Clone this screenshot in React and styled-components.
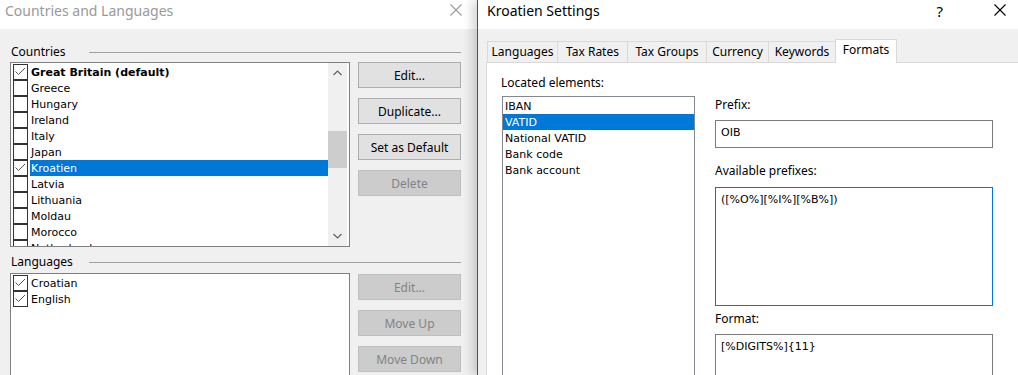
import React from "react";
import styled, { createGlobalStyle } from "styled-components";

const GlobalStyle = createGlobalStyle`
  html, body {
    margin: 0;
    padding: 0;
    background: #f0f0f0;
  }
  body {
    width: 1018px;
    height: 375px;
    overflow: hidden;
    font-family: "Noto Sans", "Liberation Sans", sans-serif;
    font-size: 12px;
    color: #000;
  }
`;

const countries = [
  { name: "Great Britain (default)", checked: true, bold: true },
  { name: "Greece" },
  { name: "Hungary" },
  { name: "Ireland" },
  { name: "Italy" },
  { name: "Japan" },
  { name: "Kroatien", checked: true, selected: true },
  { name: "Latvia" },
  { name: "Lithuania" },
  { name: "Moldau" },
  { name: "Morocco" },
  { name: "Netherlands" },
];

const languages = [
  { name: "Croatian", checked: true },
  { name: "English", checked: true },
];

const tabs = [
  { label: "Languages", width: 71 },
  { label: "Tax Rates", width: 71 },
  { label: "Tax Groups", width: 80 },
  { label: "Currency", width: 63 },
  { label: "Keywords", width: 68 },
  { label: "Formats", width: 62, active: true },
];

const elements = ["IBAN", "VATID", "National VATID", "Bank code", "Bank account"];

const CloseIcon = ({ color }) => (
  <svg width="12" height="12" viewBox="0 0 12 12">
    <path d="M0.5 0.5 L11.5 11.5 M11.5 0.5 L0.5 11.5" stroke={color} strokeWidth="1.1" fill="none" />
  </svg>
);

const Chevron = ({ up }) => (
  <svg width="9" height="6" viewBox="0 0 9 6">
    <path d={up ? "M0.5 5 L4.5 1 L8.5 5" : "M0.5 1 L4.5 5 L8.5 1"} stroke="#606060" strokeWidth="1.2" fill="none" />
  </svg>
);

const CheckMark = () => (
  <svg width="13" height="14" viewBox="0 0 13 14">
    <path d="M1.5 6.5 L4.5 9.5 L11 3" stroke="#555" strokeWidth="1" fill="none" />
  </svg>
);

const CheckList = ({ items, height, scroll }) => (
  <ListBox $height={height}>
    <Items>
      {items.map((it) => (
        <CheckRow key={it.name}>
          <CheckBox>{it.checked && <CheckMark />}</CheckBox>
          <ItemText $bold={it.bold} $selected={it.selected}>
            {it.name}
          </ItemText>
        </CheckRow>
      ))}
    </Items>
    {scroll && (
      <ScrollBar>
        <ScrollArrow>
          <Chevron up />
        </ScrollArrow>
        <Track>
          <Thumb $top={48} $size={37} />
        </Track>
        <ScrollArrow>
          <Chevron />
        </ScrollArrow>
      </ScrollBar>
    )}
  </ListBox>
);

export default function App() {
  return (
    <>
      <GlobalStyle />
      <Screen>
        <LeftDialog>
          <TitleBar $pad={5}>
            <Title $inactive>Countries and Languages</Title>
            <TitleClose $right={15}>
              <CloseIcon color="#9a9a9a" />
            </TitleClose>
          </TitleBar>
          <LeftBody>
            <GroupHeader $top={15}>
              <GroupLabel>Countries</GroupLabel>
              <Rule />
            </GroupHeader>
            <GroupRow $top={2}>
              <CheckList items={countries} height={185} scroll />
              <ButtonColumn>
                <Button>Edit...</Button>
                <Button>Duplicate...</Button>
                <Button>Set as Default</Button>
                <Button disabled>Delete</Button>
              </ButtonColumn>
            </GroupRow>
            <GroupHeader $top={7}>
              <GroupLabel>Languages</GroupLabel>
              <Rule />
            </GroupHeader>
            <GroupRow $top={3}>
              <CheckList items={languages} height={120} />
              <ButtonColumn $top={1}>
                <Button disabled>Edit...</Button>
                <Button disabled>Move Up</Button>
                <Button disabled>Move Down</Button>
              </ButtonColumn>
            </GroupRow>
          </LeftBody>
        </LeftDialog>

        <RightDialog>
          <TitleBar $pad={9}>
            <Title>Kroatien Settings</Title>
            <Help>?</Help>
            <TitleClose $right={12}>
              <CloseIcon color="#000" />
            </TitleClose>
          </TitleBar>
          <RightBody>
            <TabStrip>
              {tabs.map((t) => (
                <Tab key={t.label} $width={t.width} $active={t.active}>
                  {t.label}
                </Tab>
              ))}
            </TabStrip>
            <TabPanel>
              <ElementsColumn>
                <FieldLabel $top={1}>Located elements:</FieldLabel>
                <ElementList>
                  {elements.map((e) => (
                    <ElementItem key={e} $selected={e === "VATID"}>
                      {e}
                    </ElementItem>
                  ))}
                </ElementList>
              </ElementsColumn>
              <FormColumn>
                <FieldLabel>Prefix:</FieldLabel>
                <Field $top={7} $height={28}>OIB</Field>
                <FieldLabel $top={15}>Available prefixes:</FieldLabel>
                <Field $top={8} $height={119} $focused>
                  ([%O%][%I%][%B%])
                </Field>
                <FieldLabel $top={5}>Format:</FieldLabel>
                <Field $top={7} $height={60}>[%DIGITS%]{"{11}"}</Field>
              </FormColumn>
            </TabPanel>
          </RightBody>
        </RightDialog>
      </Screen>
    </>
  );
}

const Screen = styled.div`
  display: flex;
  width: 1018px;
  height: 375px;
  overflow: hidden;
`;

const LeftDialog = styled.div`
  flex: 0 0 477px;
  display: flex;
  flex-direction: column;
  background: #f0f0f0;
`;

const TitleBar = styled.div`
  flex: 0 0 29px;
  display: flex;
  align-items: flex-start;
  padding: 1px 0 0 ${(p) => p.$pad}px;
  background: #fff;
  box-sizing: border-box;
`;

const Title = styled.div`
  flex: 1;
  font-size: 14px;
  line-height: 20px;
  color: ${(p) => (p.$inactive ? "#999999" : "#000")};
`;

const Help = styled.div`
  font-size: 15px;
  line-height: 20px;
  margin-right: 51px;
`;

const TitleClose = styled.div`
  display: flex;
  margin: 3px ${(p) => p.$right}px 0 0;
`;

const LeftBody = styled.div`
  display: flex;
  flex-direction: column;
  padding: 0 16px 0 10px;
`;

const GroupHeader = styled.div`
  display: flex;
  align-items: center;
  height: 16px;
  margin-top: ${(p) => p.$top}px;
`;

const GroupLabel = styled.div`
  width: 78px;
  padding-left: 1px;
  line-height: 16px;
`;

const Rule = styled.div`
  flex: 1;
  height: 1px;
  background: #a0a0a0;
`;

const GroupRow = styled.div`
  display: flex;
  align-items: flex-start;
  gap: 8px;
  margin-top: ${(p) => p.$top}px;
`;

const ListBox = styled.div`
  display: flex;
  width: 340px;
  height: ${(p) => p.$height}px;
  box-sizing: border-box;
  border: 1px solid #7f7f7f;
  background: #fff;
`;

const Items = styled.div`
  flex: 1;
  display: flex;
  flex-direction: column;
  padding: 1px 0 0 2px;
  overflow: hidden;
`;

const CheckRow = styled.div`
  display: flex;
  flex: 0 0 16px;
  height: 16px;
`;

const CheckBox = styled.div`
  flex: 0 0 15px;
  height: 16px;
  box-sizing: border-box;
  border: 1px solid #333;
  margin-right: 2px;
  background: #fff;
`;

const ItemText = styled.div`
  flex: 1;
  box-sizing: border-box;
  height: 16px;
  padding: 1px 0 0 1px;
  line-height: 15px;
  font-family: "DejaVu Sans", Verdana, sans-serif;
  font-size: 11px;
  font-weight: ${(p) => (p.$bold ? 700 : 400)};
  background: ${(p) => (p.$selected ? "#0078d7" : "transparent")};
  color: ${(p) => (p.$selected ? "#fff" : "#000")};
  white-space: nowrap;
`;

const ScrollBar = styled.div`
  flex: 0 0 19px;
  margin-right: 2px;
  display: flex;
  flex-direction: column;
  background: #f0f0f0;
`;

const ScrollArrow = styled.div`
  flex: 0 0 20px;
  display: flex;
  align-items: center;
  justify-content: center;
`;

const Track = styled.div`
  flex: 1;
`;

const Thumb = styled.div`
  margin-top: ${(p) => p.$top}px;
  height: ${(p) => p.$size}px;
  background: #cdcdcd;
`;

const ButtonColumn = styled.div`
  display: flex;
  flex-direction: column;
  gap: 10px;
  width: 103px;
  margin-top: ${(p) => p.$top || 0}px;
`;

const Button = styled.button`
  height: 26px;
  padding: 0;
  box-sizing: border-box;
  border: 1px solid #adadad;
  background: #e1e1e1;
  font-family: "Noto Sans", "Liberation Sans", sans-serif;
  font-size: 12px;
  color: #000;

  &:disabled {
    background: #cccccc;
    border-color: #bfbfbf;
    color: #838383;
  }
`;

const RightDialog = styled.div`
  flex: 1;
  min-width: 0;
  display: flex;
  flex-direction: column;
  position: relative;
  z-index: 1;
  border-left: 1px solid #505050;
  background: #f0f0f0;
  box-shadow: -5px 0 9px rgba(0, 0, 0, 0.16);
  overflow: hidden;
`;

const RightBody = styled.div`
  flex: 1;
  display: flex;
  flex-direction: column;
  padding-left: 8px;
`;

const TabStrip = styled.div`
  flex: 0 0 33px;
  display: flex;
  align-items: flex-end;
  padding-left: 1px;
`;

const Tab = styled.div`
  position: relative;
  width: ${(p) => p.$width}px;
  height: ${(p) => (p.$active ? 24 : 21)}px;
  margin: 0 0 ${(p) => (p.$active ? -1 : 0)}px -1px;
  box-sizing: border-box;
  border: 1px solid #d9d9d9;
  border-bottom: none;
  background: ${(p) => (p.$active ? "#fff" : "#f0f0f0")};
  z-index: ${(p) => (p.$active ? 2 : 0)};
  text-align: center;
  line-height: ${(p) => (p.$active ? 19 : 20)}px;
  white-space: nowrap;

  &:first-child {
    margin-left: 0;
  }
`;

const TabPanel = styled.div`
  flex: 1;
  display: flex;
  gap: 20px;
  margin-right: -12px;
  padding: 11px 0 0 14px;
  border: 1px solid #d9d9d9;
  background: #fff;
`;

const ElementsColumn = styled.div`
  display: flex;
  flex-direction: column;
  width: 194px;
`;

const FieldLabel = styled.div`
  height: 16px;
  line-height: 16px;
  margin-top: ${(p) => p.$top || 0}px;
`;

const ElementList = styled.div`
  margin: 5px 0 0 1px;
  height: 300px;
  box-sizing: border-box;
  padding-top: 1px;
  border: 1px solid #828790;
  background: #fff;
`;

const ElementItem = styled.div`
  box-sizing: border-box;
  height: 16px;
  padding: 1px 0 0 2px;
  line-height: 15px;
  font-family: "DejaVu Sans", Verdana, sans-serif;
  font-size: 11px;
  background: ${(p) => (p.$selected ? "#0078d7" : "transparent")};
  color: ${(p) => (p.$selected ? "#fff" : "#000")};
`;

const FormColumn = styled.div`
  display: flex;
  flex-direction: column;
  width: 278px;
  margin-top: 23px;
`;

const Field = styled.div`
  flex: 0 0 auto;
  height: ${(p) => p.$height}px;
  margin-top: ${(p) => p.$top}px;
  box-sizing: border-box;
  padding: 4px 5px 0;
  border: 1px solid ${(p) => (p.$focused ? "#0078d7" : "#7a7a7a")};
  background: #fff;
  line-height: 16px;
  font-family: "DejaVu Sans", Verdana, sans-serif;
  font-size: 11px;
`;
